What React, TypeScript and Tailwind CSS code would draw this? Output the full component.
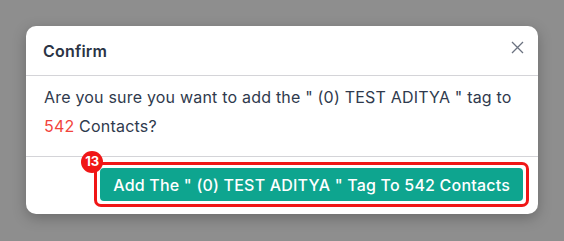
import React from "react";

export default function App() {
  return (
    <div className="w-[564px] h-[241px] bg-[#8e8e8e] relative overflow-hidden" style={{ fontFamily: "Inter, 'Noto Sans', sans-serif" }}>
      <div className="absolute left-[26px] top-[26px] w-[512px] h-[188px] bg-white rounded-[10px] shadow-[0_4px_14px_rgba(0,0,0,0.25)] flex flex-col">
        <div className="h-[50px] border-b border-[#d4d4d8] flex items-center justify-between pl-[17px] pr-[14px]">
          <span className="text-[16px] font-semibold text-[#2b3445] tracking-[0.2px]">Confirm</span>
          <svg width="13" height="13" viewBox="0 0 13 13" className="mb-[6px]">
            <path d="M1 1 L12 12 M12 1 L1 12" stroke="#6b7280" strokeWidth="1.3" />
          </svg>
        </div>
        <div className="h-[81px] border-b border-[#d4d4d8] pl-[18px] pt-[7px] text-[16px] leading-[29px] text-[#2f3a4d] tracking-[0.2px]">
          <div>Are you sure you want to add the " (0) TEST ADITYA " tag to</div>
          <div><span className="text-[#f2443b]">542</span> Contacts?</div>
        </div>
        <div className="flex-1 flex justify-end items-start pr-[9px] pt-[5px]">
          <div className="relative border-[3px] border-[#f01616] rounded-[7px] p-[3px]">
            <div className="bg-[#0ea58f] rounded-[4px] h-[33px] px-[13px] flex items-center text-white text-[16px] font-medium tracking-[0.2px] whitespace-nowrap">
              Add The " (0) TEST ADITYA " Tag To 542 Contacts
            </div>
            <div className="absolute -left-[16px] -top-[14px] w-[22px] h-[22px] rounded-full bg-[#f01616] text-white text-[13px] font-bold flex items-center justify-center">
              13
            </div>
          </div>
        </div>
      </div>
    </div>
  );
}
